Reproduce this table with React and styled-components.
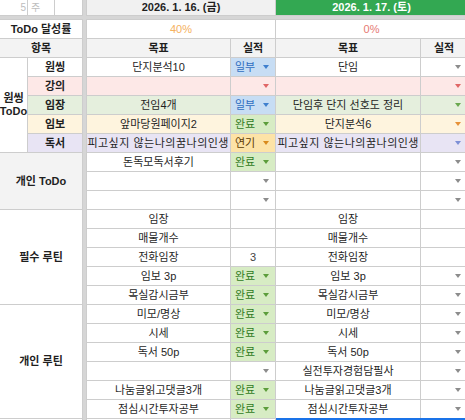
import React from 'react';
import styled, { createGlobalStyle } from 'styled-components';

const GlobalStyle = createGlobalStyle`
  html, body { margin: 0; padding: 0; overflow: hidden; background: #fff; }
  body { font-family: "Liberation Sans", "Noto Sans CJK KR", sans-serif; }
`;

const LINE = '#cdcdcd';
const FREEZE = '#d6d6d6';
const HEAD = '#f3f3f3';

const BG = {
  white: '#ffffff',
  pink: '#fde8e7',
  green: '#e5efdd',
  yellow: '#fef4de',
  purple: '#e8e4f4',
};

const ARROW = {
  grey: '#8c8c8c',
  red: '#e06666',
  green: '#6aa84f',
  orange: '#e69138',
  purple: '#7d8fd6',
};

const STATUS = {
  일부: { bg: '#c7ddf4', fg: '#2f6dc0', arrow: '#3f7fce' },
  완료: { bg: '#d7ecc4', fg: '#2f7a22', arrow: '#5c9d3b' },
  연기: { bg: '#fde3a7', fg: '#5e3c04', arrow: '#d98a1c' },
};

const Sheet = styled.div`
  display: grid;
  grid-template-columns: 27px 26px 27px 3px 143px 44px 144px 46px;
  grid-template-rows: 15px 3px repeat(22, 18px);
  gap: 1px;
  background: ${LINE};
  width: 467px;
  font-size: 11px;
  color: #1f1f1f;
`;

const FreezeCol = styled.div`
  grid-column: 4;
  grid-row: 1 / -1;
  background: ${FREEZE};
`;

const FreezeRow = styled.div`
  grid-column: 1 / -1;
  grid-row: 2;
  background: ${FREEZE};
`;

const Cell = styled.div`
  grid-column: span ${(p) => p.$span || 1};
  grid-row: span ${(p) => p.$rows || 1};
  background: ${(p) => p.$bg || '#fff'};
  color: ${(p) => p.$color || 'inherit'};
  font-weight: ${(p) => (p.$bold ? 700 : 400)};
  letter-spacing: ${(p) => (p.$wide ? '0.5px' : 'normal')};
  display: flex;
  align-items: center;
  justify-content: ${(p) =>
    p.$align === 'left' ? 'flex-start' : p.$align === 'right' ? 'flex-end' : 'center'};
  padding: 0 ${(p) => (p.$align === 'right' ? '1px' : '3px')};
  min-width: 0;
  overflow: hidden;
  white-space: nowrap;
  line-height: 1;
`;

const RowNum = styled(Cell)`
  color: #bdbdbd;
  font-size: 10px;
`;

const DateHead = styled(Cell)`
  grid-column: span 2;
  background: ${(p) => (p.$today ? '#33a852' : '#f1f1f1')};
  color: ${(p) => (p.$today ? '#ffffff' : '#1f1f1f')};
  font-weight: 700;
`;

const GroupLabel = styled(Cell)`
  font-weight: 700;
  white-space: normal;
  text-align: center;
  line-height: 13px;
  overflow: visible;
  padding: 0;
`;

const StatusBox = styled.div`
  background: ${(p) => p.$bg};
  color: ${(p) => p.$fg};
  display: flex;
  align-items: center;
  padding: 0 6px 0 4px;
  min-width: 0;
  white-space: nowrap;
  line-height: 1;
`;

const Arrow = styled.span`
  width: 0;
  height: 0;
  margin-left: auto;
  border-left: 3px solid transparent;
  border-right: 3px solid transparent;
  border-top: 4px solid ${(p) => p.$color};
`;

const Selection = styled(Cell)`
  grid-column: span 2;
  margin-top: -1px;
  box-shadow: inset 0 2px 0 #1a73e8;
`;

function Status({ value, bg, arrow }) {
  if (value && STATUS[value]) {
    const s = STATUS[value];
    return (
      <StatusBox $bg={s.bg} $fg={s.fg}>
        {value}
        <Arrow $color={s.arrow} />
      </StatusBox>
    );
  }
  if (value) {
    return (
      <Cell $bg={bg} $color="#444">
        {value}
      </Cell>
    );
  }
  return (
    <StatusBox $bg={bg}>
      {arrow && <Arrow $color={ARROW[arrow]} />}
    </StatusBox>
  );
}

function DataRow({ row }) {
  const bg = BG[row.bg || 'white'];
  const align = row.clip ? 'right' : 'center';
  return (
    <>
      {row.label && (
        <Cell $span={2} $bg={bg} $bold>
          {row.label}
        </Cell>
      )}
      <Cell $bg={bg} $align={align} $wide={row.clip}>{row.l}</Cell>
      <Status value={row.ls} bg={bg} arrow={row.la} />
      <Cell $bg={bg} $align={align} $wide={row.clip}>{row.r}</Cell>
      <Status value={row.rs} bg={bg} arrow={row.ra} />
    </>
  );
}

const DOKSEO = '피고싶지 않는나의꿈나의인생';

const groups = [
  {
    title: ['원씽', 'ToDo'],
    sub: true,
    rows: [
      { label: '원씽', l: '단지분석10', ls: '일부', r: '단임', ra: 'grey' },
      { label: '강의', bg: 'pink', l: '', la: 'red', r: '', ra: 'red' },
      { label: '임장', bg: 'green', l: '전임4개', ls: '일부', r: '단임후 단지 선호도 정리', ra: 'green' },
      { label: '임보', bg: 'yellow', l: '앞마당원페이지2', ls: '완료', r: '단지분석6', ra: 'orange' },
      { label: '독서', bg: 'purple', l: DOKSEO, ls: '연기', r: DOKSEO, ra: 'purple', clip: true },
    ],
  },
  {
    title: ['개인 ToDo'],
    head: true,
    rows: [
      { l: '돈독모독서후기', ls: '완료', r: '', ra: 'grey' },
      { l: '', la: 'grey', r: '', ra: 'grey' },
      { l: '', la: 'grey', r: '', ra: 'grey' },
    ],
  },
  {
    title: ['필수 루틴'],
    rows: [
      { l: '임장', r: '임장' },
      { l: '매물개수', r: '매물개수' },
      { l: '전화임장', ls: '3', r: '전화임장' },
      { l: '임보 3p', ls: '완료', r: '임보 3p', ra: 'grey' },
      { l: '목실감시금부', ls: '완료', r: '목실감시금부', ra: 'grey' },
    ],
  },
  {
    title: ['개인 루틴'],
    rows: [
      { l: '미모/명상', ls: '완료', r: '미모/명상', ra: 'grey' },
      { l: '시세', ls: '완료', r: '시세', ra: 'grey' },
      { l: '독서 50p', ls: '완료', r: '독서 50p', ra: 'grey' },
      { l: '', la: 'grey', r: '실전투자경험담필사', ra: 'grey' },
      { l: '나눔글읽고댓글3개', ls: '완료', r: '나눔글읽고댓글3개', ra: 'grey' },
      { l: '점심시간투자공부', ls: '완료', r: '점심시간투자공부', ra: 'grey' },
    ],
  },
];

export default function App() {
  return (
    <>
      <GlobalStyle />
      <Sheet>
        <FreezeCol />
        <FreezeRow />

        <RowNum $align="right">5</RowNum>
        <RowNum $align="left">주</RowNum>
        <Cell />
        <DateHead>2026. 1. 16. (금)</DateHead>
        <DateHead $today>2026. 1. 17. (토)</DateHead>

        <Cell $span={3} $bold>ToDo 달성률</Cell>
        <Cell $span={2} $color="#f5b160">40%</Cell>
        <Cell $span={2} $color="#e67a74">0%</Cell>

        <Cell $span={3} $bg={HEAD} $bold>항목</Cell>
        <Cell $bg={HEAD} $bold>목표</Cell>
        <Cell $bg={HEAD} $bold>실적</Cell>
        <Cell $bg={HEAD} $bold>목표</Cell>
        <Cell $bg={HEAD} $bold>실적</Cell>

        {groups.map((g, gi) => (
          <React.Fragment key={gi}>
            <GroupLabel $span={g.sub ? 1 : 3} $rows={g.rows.length} $bg={g.head ? HEAD : '#fff'}>
              {g.title.map((t, i) => (
                <React.Fragment key={i}>
                  {i > 0 && <br />}
                  {t}
                </React.Fragment>
              ))}
            </GroupLabel>
            {g.rows.map((row, ri) => (
              <DataRow key={ri} row={row} />
            ))}
          </React.Fragment>
        ))}

        <Cell $span={3} />
        <Cell />
        <Cell />
        <Selection />
      </Sheet>
    </>
  );
}
